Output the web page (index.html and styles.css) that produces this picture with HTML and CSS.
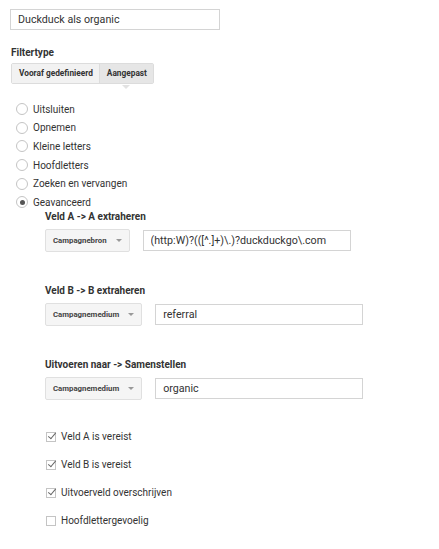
FILE: index.html
```html
<!DOCTYPE html>
<html lang="nl">
<head>
    <meta charset="UTF-8">
    <title>Filter bewerken</title>
    <link rel="stylesheet" href="styles.css">
</head>
<body>
    <div class="filter-form">
        <label class="field-label name-label">Filternaam</label>
        <input type="text" class="text-input name-input" value="Duckduck als organic">

        <div class="field-label type-label">Filtertype</div>
        <div class="tabs">
            <span class="tab">Vooraf gedefinieerd</span>
            <span class="tab active">Aangepast</span>
        </div>

        <ul class="radio-list">
            <li><span class="radio"></span>Uitsluiten</li>
            <li><span class="radio"></span>Opnemen</li>
            <li><span class="radio"></span>Kleine letters</li>
            <li><span class="radio"></span>Hoofdletters</li>
            <li><span class="radio"></span>Zoeken en vervangen</li>
            <li><span class="radio checked"></span>Geavanceerd</li>
        </ul>

        <div class="advanced">
            <div class="field-block">
                <div class="field-label">Veld A -&gt; A extraheren</div>
                <div class="field-row">
                    <span class="select">Campagnebron<span class="caret"></span></span>
                    <input type="text" class="text-input" value="(http:W)?(([^.]+)\.)?duckduckgo\.com">
                </div>
            </div>

            <div class="field-block">
                <div class="field-label">Veld B -&gt; B extraheren</div>
                <div class="field-row">
                    <span class="select">Campagnemedium<span class="caret"></span></span>
                    <input type="text" class="text-input" value="referral">
                </div>
            </div>

            <div class="field-block">
                <div class="field-label">Uitvoeren naar -&gt; Samenstellen</div>
                <div class="field-row">
                    <span class="select">Campagnemedium<span class="caret"></span></span>
                    <input type="text" class="text-input" value="organic">
                </div>
            </div>

            <ul class="check-list">
                <li><span class="checkbox checked"></span>Veld A is vereist</li>
                <li><span class="checkbox checked"></span>Veld B is vereist</li>
                <li><span class="checkbox checked"></span>Uitvoerveld overschrijven</li>
                <li><span class="checkbox"></span>Hoofdlettergevoelig</li>
            </ul>
        </div>
    </div>
</body>
</html>
```

FILE: styles.css
```css
body {
    font-family: Roboto, "Liberation Sans", sans-serif;
    font-size: 10px;
    color: #333;
    background-color: #fff;
    margin: 0;
}
.filter-form {
    padding-left: 10px;
    margin-top: -10px;
}
.field-label {
    font-weight: bold;
    color: #333;
    line-height: 10px;
}
.name-label {
    display: block;
    line-height: 13px;
    margin-bottom: 6px;
}
.text-input {
    font-family: inherit;
    font-size: 10.7px;
    color: #333;
    height: 21px;
    border: 1px solid #d4d4d4;
    padding: 0 7px;
    box-sizing: border-box;
    outline: none;
}
.name-input {
    width: 210px;
    display: block;
    margin-bottom: 18px;
}
.type-label {
    margin-left: 1px;
    margin-bottom: 5px;
}
.tabs {
    display: inline-flex;
    margin-left: 1px;
    border: 1px solid #dcdcdc;
    border-radius: 2px;
}
.tab {
    font-size: 8.3px;
    font-weight: bold;
    color: #333;
    background-color: #f2f2f2;
    padding: 0 6px 0 7px;
    line-height: 19px;
}
.tab.active {
    background-color: #e6e6e6;
    border-left: 1px solid #dcdcdc;
    position: relative;
}
.tab.active::after {
    content: "";
    position: absolute;
    left: 50%;
    bottom: -6px;
    margin-left: -4px;
    border-left: 4px solid transparent;
    border-right: 4px solid transparent;
    border-top: 4px solid #e2e2e2;
}
.radio-list, .check-list {
    list-style: none;
    margin: 0;
    padding: 0;
}
.radio-list {
    margin-top: 16px;
    margin-left: 6px;
}
.radio-list li {
    display: flex;
    align-items: center;
    height: 18.6px;
}
.radio {
    width: 10px;
    height: 10px;
    border: 1px solid #c4c4c4;
    border-radius: 50%;
    margin-right: 5px;
    display: flex;
    align-items: center;
    justify-content: center;
}
.radio.checked::after {
    content: "";
    width: 5px;
    height: 5px;
    border-radius: 50%;
    background-color: #555;
}
.advanced {
    padding-left: 35px;
}
.field-block + .field-block {
    margin-top: 34px;
}
.field-row {
    display: flex;
    align-items: center;
    gap: 13px;
    margin-top: 7px;
}
.field-row .text-input {
    width: 208px;
}
.select {
    display: inline-flex;
    align-items: center;
    height: 23px;
    box-sizing: border-box;
    padding: 0 7px;
    background-color: #f5f5f5;
    border: 1px solid #e0e0e0;
    border-radius: 2px;
    font-size: 7.8px;
    font-weight: bold;
    color: #444;
}
.caret {
    width: 0;
    height: 0;
    border-left: 3px solid transparent;
    border-right: 3px solid transparent;
    border-top: 3px solid #999;
    margin-left: 9px;
    margin-top: 1px;
}
.check-list {
    margin-top: 23px;
}
.check-list li {
    display: flex;
    align-items: center;
    height: 28px;
}
.checkbox {
    width: 8px;
    height: 8px;
    border: 1px solid #c4c4c4;
    margin-left: 1px;
    margin-right: 5px;
    position: relative;
}
.checkbox.checked::after {
    content: "";
    position: absolute;
    left: 3px;
    top: -2px;
    width: 3px;
    height: 7px;
    border-right: 1.5px solid #666;
    border-bottom: 1.5px solid #666;
    transform: rotate(40deg);
}
```
